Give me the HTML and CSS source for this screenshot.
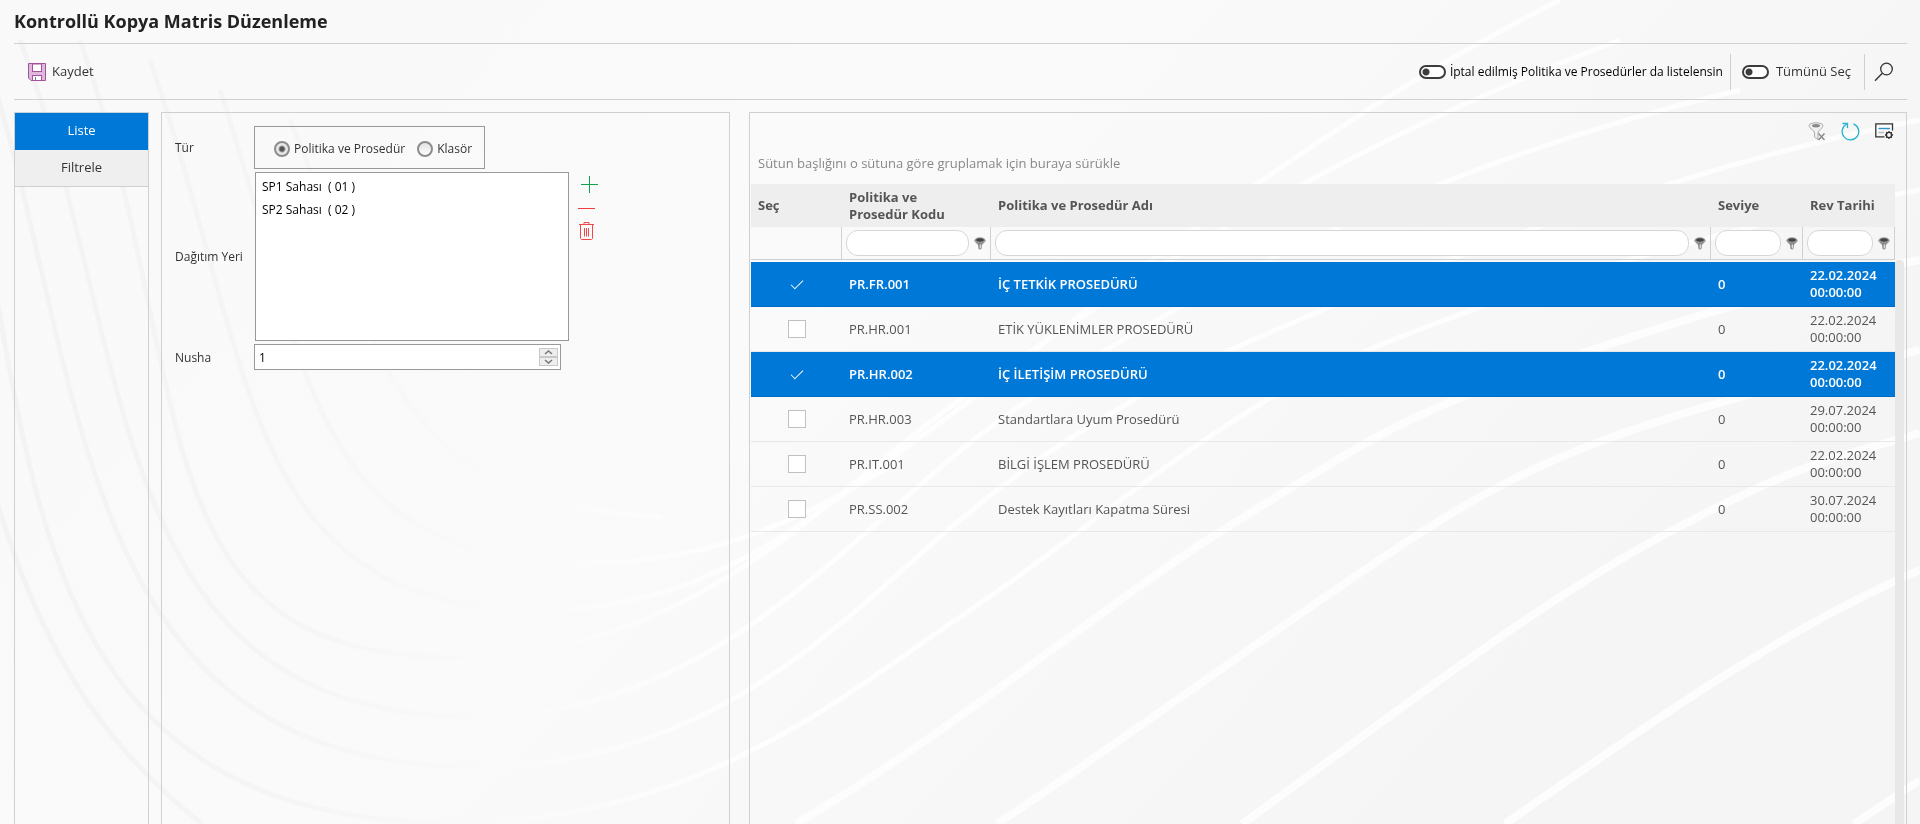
FILE: index.html
```html
<!DOCTYPE html>
<html lang="tr">
<head>
<meta charset="utf-8">
<title>Kontrollü Kopya Matris Düzenleme</title>
<link rel="stylesheet" href="styles.css">
</head>
<body>
<svg class="backdrop" viewBox="0 0 1920 824" preserveAspectRatio="none" aria-hidden="true">
  <defs>
    <linearGradient id="shade" x1="0" y1="0" x2="1" y2="0.4">
      <stop offset="0" stop-color="#f9f9f9"/><stop offset="0.5" stop-color="#fafafa"/><stop offset="1" stop-color="#f5f5f5"/>
    </linearGradient>
    <linearGradient id="band" gradientUnits="userSpaceOnUse" x1="0" y1="0" x2="1920" y2="0">
      <stop offset="0" stop-color="#f3f3f3"/><stop offset="0.14" stop-color="#f5f5f5"/><stop offset="0.24" stop-color="#f9f9f9"/><stop offset="0.4" stop-color="#fefefe"/><stop offset="1" stop-color="#fdfdfd"/>
    </linearGradient>
  </defs>
  <rect width="1920" height="824" fill="url(#shade)"/>
  <g fill="none" stroke="url(#band)" stroke-width="5">
    <path d="M-60 300C0 500 20 680 202 824"/>
    <path d="M-40 120C40 420 0 823 453 823C700 823 850 690 960 617S1150 470 1272 397S1700 230 1920 190"/>
    <path d="M-20 40C90 360 60 767 477 767C720 767 850 610 960 520S1090 430 1137 397S1600 180 1920 120"/>
    <path d="M20 40C140 360 100 717 477 717C720 717 860 520 1000 420S1400 170 1740 90"/>
    <path d="M80 40C200 380 130 657 453 657C700 657 830 490 960 400S1300 160 1620 40"/>
    <path d="M150 60C260 380 240 610 545 610C720 610 830 500 930 430S1280 140 1560 0"/>
    <path d="M220 90C310 360 300 563 588 563C720 563 820 510 900 460"/>
    <path d="M290 120C380 330 370 500 661 517"/>
  </g>
  <g fill="none" stroke="#fdfdfd" stroke-width="8">
    <path d="M796 824C960 727 1110 600 1223 530S1380 430 1462 397S1760 290 1920 260"/>
    <path d="M997 824C1110 750 1300 610 1425 530S1640 420 1920 350"/>
    <path d="M1242 824C1400 710 1540 600 1673 530S1830 460 1920 433"/>
    <path d="M1505 824C1640 730 1780 630 1920 570"/>
    <path d="M1854 824L1920 780"/>
  </g>
</svg>
<svg class="sprites" aria-hidden="true">
  <symbol id="funnel" viewBox="0 0 12 13">
    <path d="M.5 3.500C.5 5.800 4.300 6.500 4.300 9V11.500L6 12.800L7.700 11.500V9C7.700 6.500 11.500 5.800 11.500 3.500Z" fill="#888"/>
    <path d="M5.700 7.500H7V11.500H5.700Z" fill="#ddd"/>
    <ellipse cx="6" cy="3.200" rx="5.500" ry="2.900" fill="#999"/>
    <ellipse cx="6" cy="3" rx="3.800" ry="1.700" fill="#444"/>
  </symbol>
</svg>
<header class="title"><h1>Kontrollü Kopya Matris Düzenleme</h1></header>
<div class="toolbar">
  <button class="tool save" type="button">
    <svg width="18" height="18" viewBox="0 0 18 18"><path d="M.5 .5H17.500V17.500H3L.5 15Z" fill="#dfb8dd" stroke="#a352a0"/><rect x="4.500" y="1" width="9" height="7.500" fill="#fff" stroke="#a352a0"/><rect x="4.500" y="12.500" width="9" height="5" fill="#fff" stroke="#a352a0"/><path d="M7.500 14V17" stroke="#777"/></svg>
    <span>Kaydet</span>
  </button>
  <div class="right-tools">
    <label class="toggle dark"><input type="checkbox" class="switch">İptal edilmiş Politika ve Prosedürler da listelensin</label>
    <label class="toggle all"><input type="checkbox" class="switch">Tümünü Seç</label>
    <button class="tool search" type="button" aria-label="Ara">
      <svg width="20" height="20" viewBox="0 0 20 20" fill="none" stroke="#333" stroke-width="1.300"><circle cx="12.500" cy="7" r="5.800"/><path d="M8.300 11.200L1 18.800"/></svg>
    </button>
  </div>
</div>
<main class="layout">
  <nav class="side panel">
    <button class="tab active" type="button">Liste</button>
    <button class="tab" type="button">Filtrele</button>
  </nav>
  <section class="panel form">
    <span class="label" id="tur">Tür</span>
    <div class="radios" role="radiogroup" aria-labelledby="tur">
      <label><input type="radio" name="tur" checked>Politika ve Prosedür</label>
      <label><input type="radio" name="tur">Klasör</label>
    </div>
    <label class="label" for="yer">Dağıtım Yeri</label>
    <div class="places">
      <select id="yer" size="8">
        <option>SP1 Sahası&nbsp; ( 01 )</option>
        <option>SP2 Sahası&nbsp; ( 02 )</option>
      </select>
      <div class="actions">
        <button class="add" type="button" aria-label="Ekle"><svg width="17" height="17" viewBox="0 0 17 17"><path d="M0 8.500H17M8.500 0V17" stroke="#12a150"/></svg></button>
        <button type="button" aria-label="Çıkar"><svg width="17" height="3" viewBox="0 0 17 3"><path d="M0 1.500H17" stroke="#f03c3c"/></svg></button>
        <button type="button" aria-label="Sil"><svg width="17" height="18" viewBox="0 0 17 18" fill="none" stroke="#f04848"><path d="M1 2.500H16M6 2.500V.5H11V2.500M2.500 3V16.500L3.500 17.500H13.500L14.500 16.500V3M6.500 6V14.500M8.500 6V14.500M10.500 6V14.500"/></svg></button>
      </div>
    </div>
    <label class="label" for="nusha">Nusha</label>
    <div class="spin">
      <input id="nusha" type="text" value="1">
      <div class="steps">
        <button type="button" aria-label="Artır"><svg width="9" height="5" viewBox="0 0 9 5"><path d="M1 4L4.500 1L8 4" fill="none" stroke="#777" stroke-width="1.500"/></svg></button>
        <button type="button" aria-label="Azalt"><svg width="9" height="5" viewBox="0 0 9 5"><path d="M1 1L4.500 4L8 1" fill="none" stroke="#777" stroke-width="1.500"/></svg></button>
      </div>
    </div>
  </section>
  <section class="panel grid">
    <div class="grid-tools">
      <button type="button" aria-label="Filtreyi temizle"><svg width="18" height="19" viewBox="0 0 18 19"><path d="M1 3.500C1 0 15 0 15 3.500C15 7 10 7.500 10 11V17.500L6.500 15V11C6.500 7.500 1 7 1 3.500Z" fill="#f1f1f1" stroke="#aaa"/><ellipse cx="8" cy="3.700" rx="4" ry="1.700" fill="#888"/><path d="M10.500 11.500L16.500 18M16.500 11.500L10.500 18" stroke="#888" stroke-width="1.400"/></svg></button>
      <button type="button" aria-label="Yenile"><svg width="19" height="19" viewBox="0 0 19 19" fill="none" stroke="#24b4cc" stroke-width="1.300"><path d="M5.500 2.300A8.300 8.300 0 1 0 12.500 1.900"/><path d="M1.500 1.500H6.500V6"/></svg></button>
      <button type="button" aria-label="Ayarlar"><svg width="19" height="17" viewBox="0 0 19 17" fill="none"><path d="M9.500 13.800H.8V.8H17.500V7.500" stroke="#333" stroke-width="1.300"/><path d="M3.500 5.500H15" stroke="#2f8fd0" stroke-width="1.400"/><path d="M3.500 9.500H9" stroke="#bbb" stroke-width="1.400"/><circle cx="14" cy="12" r="2.600" stroke="#333" stroke-width="1.400"/><path d="M14 8V9.300M14 14.700V16M10 12H11.300M16.700 12H18M11.200 9.200L12.100 10.100M15.900 13.900L16.800 14.800M16.800 9.200L15.900 10.100M12.100 13.900L11.200 14.800" stroke="#333" stroke-width="1.300"/></svg></button>
    </div>
    <div class="group-hint">Sütun başlığını o sütuna göre gruplamak için buraya sürükle</div>
    <div class="grid-body">
      <table>
        <colgroup><col class="c-sel"><col class="c-code"><col><col class="c-lvl"><col class="c-date"></colgroup>
        <thead>
          <tr class="heads"><th>Seç</th><th>Politika ve<br>Prosedür Kodu</th><th>Politika ve Prosedür Adı</th><th>Seviye</th><th>Rev Tarihi</th></tr>
          <tr class="filters">
            <td></td>
            <td><div class="filter"><input type="text" aria-label="Kod filtresi"><button type="button" aria-label="Filtre"><svg width="12" height="13"><use href="#funnel"/></svg></button></div></td>
            <td><div class="filter"><input type="text" aria-label="Ad filtresi"><button type="button" aria-label="Filtre"><svg width="12" height="13"><use href="#funnel"/></svg></button></div></td>
            <td><div class="filter"><input type="text" aria-label="Seviye filtresi"><button type="button" aria-label="Filtre"><svg width="12" height="13"><use href="#funnel"/></svg></button></div></td>
            <td><div class="filter"><input type="text" aria-label="Tarih filtresi"><button type="button" aria-label="Filtre"><svg width="12" height="13"><use href="#funnel"/></svg></button></div></td>
          </tr>
        </thead>
        <tbody>
          <tr class="on"><td class="pick"><input type="checkbox" checked aria-label="PR.FR.001"></td><td>PR.FR.001</td><td>İÇ TETKİK PROSEDÜRÜ</td><td>0</td><td>22.02.2024 00:00:00</td></tr>
          <tr><td class="pick"><input type="checkbox" aria-label="PR.HR.001"></td><td>PR.HR.001</td><td>ETİK YÜKLENİMLER PROSEDÜRÜ</td><td>0</td><td>22.02.2024 00:00:00</td></tr>
          <tr class="on"><td class="pick"><input type="checkbox" checked aria-label="PR.HR.002"></td><td>PR.HR.002</td><td>İÇ İLETİŞİM PROSEDÜRÜ</td><td>0</td><td>22.02.2024 00:00:00</td></tr>
          <tr><td class="pick"><input type="checkbox" aria-label="PR.HR.003"></td><td>PR.HR.003</td><td>Standartlara Uyum Prosedürü</td><td>0</td><td>29.07.2024 00:00:00</td></tr>
          <tr><td class="pick"><input type="checkbox" aria-label="PR.IT.001"></td><td>PR.IT.001</td><td>BİLGİ İŞLEM PROSEDÜRÜ</td><td>0</td><td>22.02.2024 00:00:00</td></tr>
          <tr><td class="pick"><input type="checkbox" aria-label="PR.SS.002"></td><td>PR.SS.002</td><td>Destek Kayıtları Kapatma Süresi</td><td>0</td><td>30.07.2024 00:00:00</td></tr>
        </tbody>
      </table>
      <div class="scrollbar"></div>
    </div>
  </section>
</main>
</body>
</html>
```
FILE: styles.css
```css
* { box-sizing: border-box; }
body {
  margin: 0;
  min-height: 100vh;
  padding: 0 13px 0 14px;
  display: flex;
  flex-direction: column;
  font: 13px/17px "Open Sans", "Noto Sans", sans-serif;
  color: #333;
}
button, input, select { font: inherit; color: inherit; }
button { margin: 0; padding: 0; border: 0; background: none; display: flex; align-items: center; justify-content: center; }
svg { display: block; }
.backdrop { position: fixed; inset: 0; width: 100%; height: 100%; z-index: -1; }
.sprites { position: absolute; width: 0; height: 0; }

.title { height: 44px; border-bottom: 1px solid #d0d0d0; display: flex; align-items: center; padding-bottom: 2px; }
h1 { margin: 0; font-size: 18px; line-height: 24px; font-weight: 700; color: #222; }

.toolbar { height: 56px; border-bottom: 1px solid #d0d0d0; display: flex; align-items: center; justify-content: space-between; padding: 0 13px 0 14px; }
.save { gap: 6px; }
.right-tools { display: flex; align-items: center; }
.toggle { display: flex; align-items: center; height: 36px; }
.dark { font-size: 12px; color: #000; gap: 4px; padding-right: 7px; }
.all { gap: 7px; padding: 0 13px 0 11px; border-left: 1px solid #d0d0d0; border-right: 1px solid #d0d0d0; }
.search { padding-left: 9px; }
.switch {
  appearance: none;
  margin: 0;
  width: 27px;
  height: 14px;
  border: 2px solid #3c3c3c;
  border-radius: 7px;
  background: radial-gradient(circle at 5px 5px, #3c3c3c 3px, transparent 4px) #fff;
}

.layout { flex: 1; display: flex; padding-top: 12px; }
.panel { border: 1px solid #d0d0d0; border-bottom: 0; }
.side { width: 135px; margin-right: 12px; }
.tab { width: 100%; height: 37px; padding-bottom: 2px; background: #efefef; border-bottom: 1px solid #d0d0d0; }
.tab.active { background: #0078d7; color: #fff; border-bottom-color: #0078d7; }

.form {
  width: 569px;
  margin-right: 19px;
  padding: 13px;
  display: grid;
  grid-template-columns: 79px 1fr;
  align-content: start;
  align-items: center;
  row-gap: 3px;
  font-size: 12px;
}
.radios { justify-self: start; height: 43px; border: 1px solid #999; display: flex; align-items: center; gap: 12px; padding: 2px 12px 0 19px; }
.radios label { display: flex; align-items: center; gap: 4px; }
.radios input {
  appearance: none;
  margin: 0;
  width: 16px;
  height: 16px;
  border: 2px solid #8c8c8c;
  border-radius: 50%;
  background: linear-gradient(#e2e2e2, #fdfdfd);
}
.radios input:checked { background: radial-gradient(circle, #555 2px, #e8e8e8 4px); }
.places { display: flex; }
.places select { width: 314px; height: 169px; margin-left: 1px; border: 1px solid #999; border-radius: 0; background: #fff; padding: 2px 0; color: #000; overflow: hidden; outline: 0; }
.places option { padding: 3px 6px; min-height: 23px; line-height: 17px; }
.actions { display: flex; flex-direction: column; gap: 12px; padding: 4px 0 0 9px; align-items: flex-start; }
.add { margin: 0 0 2px 3px; }
.spin { width: 307px; height: 26px; border: 1px solid #999; background: #fff; display: flex; padding: 3px 2px; color: #000; }
.spin input { flex: 1; min-width: 0; border: 0; padding: 0 2px; background: none; }
.steps { width: 19px; display: flex; flex-direction: column; }
.steps button { flex: 1; border: 1px solid #c8c8c8; background: #eee; }

.grid { flex: 1; min-width: 0; display: flex; flex-direction: column; padding-left: 1px; color: #555; }
.grid-tools { display: flex; justify-content: flex-end; align-items: center; gap: 15px; height: 36px; padding-right: 12px; }
.group-hint { height: 35px; padding: 6px 7px; color: #888; }
.grid-body { flex: 1; display: flex; align-items: flex-start; padding-right: 2px; }
table { flex: 1; width: 100%; border-collapse: separate; border-spacing: 0; table-layout: fixed; }
.c-sel { width: 91px; }
.c-code { width: 149px; }
.c-lvl, .c-date { width: 92px; }
th { height: 43px; padding: 0 7px; background: #eee; text-align: left; font-weight: 700; }
.filters td { height: 33px; padding: 0 3px 0 4px; border-right: 1px solid #d0d0d0; border-bottom: 1px solid #d0d0d0; }
.filter { display: flex; align-items: center; gap: 4px; }
.filter input { flex: 1; min-width: 0; height: 26px; border: 1px solid #d6d6d6; border-radius: 12px; background: #fff; padding: 0 8px; }
.filter button { width: 14px; }
tbody::before { content: ""; display: block; height: 2px; }
tbody td { height: 45px; padding: 0 7px; border-bottom: 1px solid #e8e8e8; }
.on td { background: #0078d7; color: #fff; border-bottom-color: #0069c4; font-weight: 600; }
.pick { text-align: center; }
.pick input { appearance: none; display: block; margin: 0 auto; width: 18px; height: 18px; border: 1px solid #c0c0c0; background: #fff; }
.pick input:checked { border: 0; background: none; }
.pick input:checked::before { content: ""; display: block; width: 11px; height: 5px; margin: 5px 3px; border: solid #fff; border-width: 0 0 1px 1px; transform: rotate(-45deg); }
.scrollbar { width: 9px; align-self: stretch; margin-top: 76px; background: #e8e8e8; border-radius: 4px 4px 0 0; }
```
